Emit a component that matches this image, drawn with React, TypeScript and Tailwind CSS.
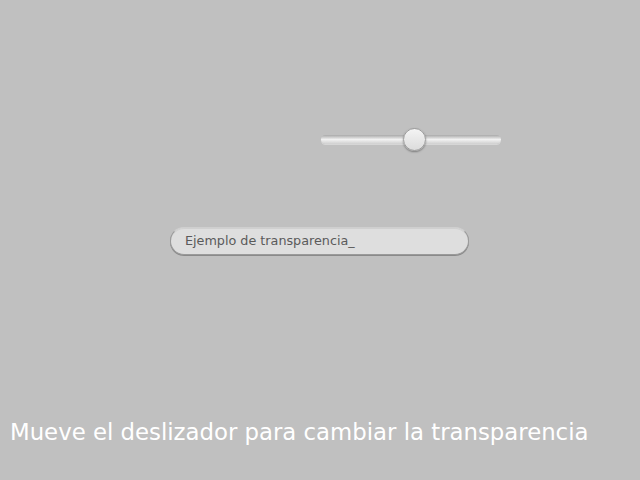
export default function App() {
  return (
    <div className="w-[640px] h-[480px] bg-[#c0c0c0] flex flex-col font-['DejaVu_Sans',sans-serif] overflow-hidden">
      <div className="h-[128px]" />
      <div className="flex items-center h-[23px] pl-[321px]">
        <Slider />
      </div>
      <div className="h-[76px]" />
      <div className="pl-[170px]">
        <div className="w-[299px] h-[28px] rounded-full bg-[#dedede] border border-[#9a9a9a] border-t-[#cfcfcf] shadow-[inset_0_1px_0_#d0d0d0,0_1px_0_#8a8a8a] flex items-center pl-[14px] text-[12.75px] text-[#5a5a5a]">
          Ejemplo de transparencia_
        </div>
      </div>
      <div className="flex-1" />
      <p className="pl-[10px] pb-[35px] text-[22.8px] leading-[26px] text-white">
        Mueve el deslizador para cambiar la transparencia
      </p>
    </div>
  );
}

const Slider = () => {
  return (
    <div className="relative w-[180px] h-[9px]">
      <div className="w-full h-full rounded-full bg-gradient-to-b from-[#a9a9a9] via-[#f2f2f2] to-[#cfcfcf] shadow-[0_1px_0_#d6d6d6]" />
      <div className="absolute left-[82px] top-[-7px] w-[23px] h-[23px] rounded-full bg-gradient-to-b from-[#f4f4f4] to-[#dcdcdc] border border-[#9c9c9c] shadow-[0_1px_2px_rgba(0,0,0,0.35)]" />
    </div>
  );
};
